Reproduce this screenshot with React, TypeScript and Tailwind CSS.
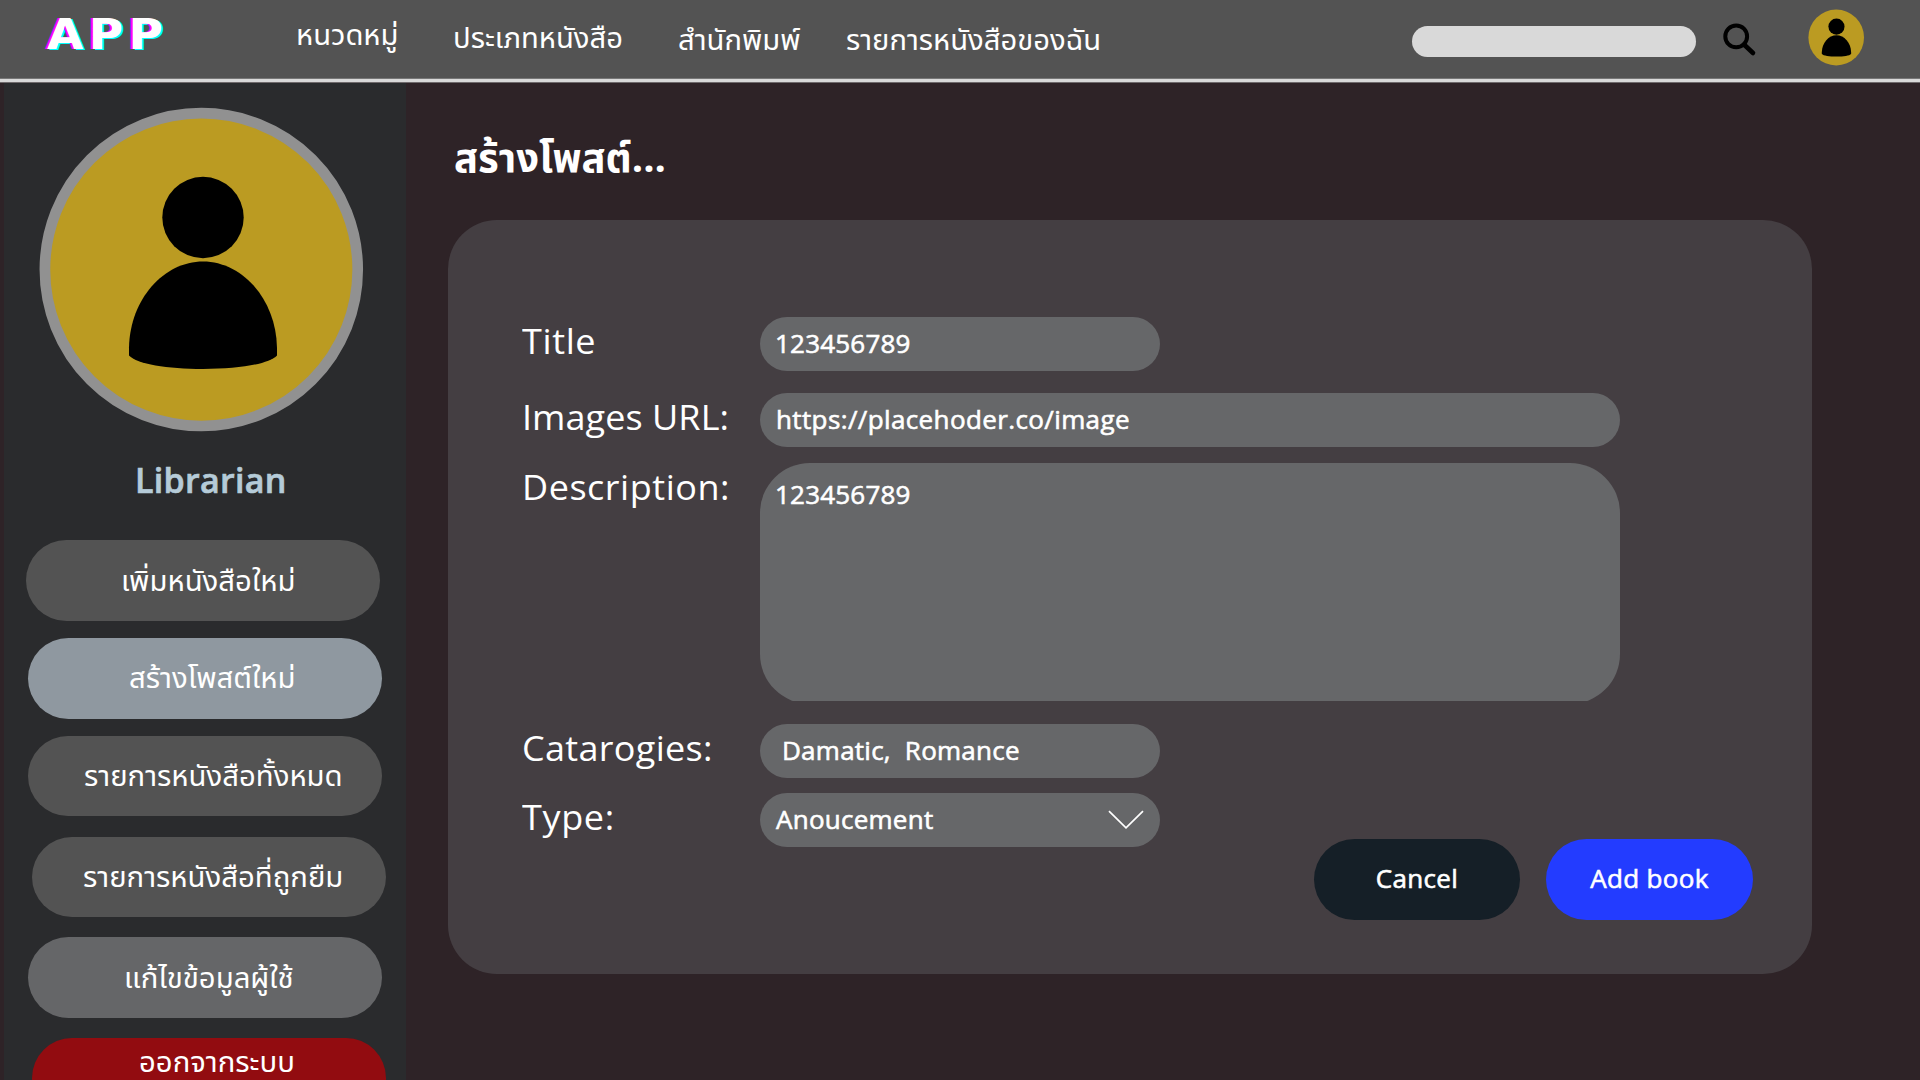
import type { ReactNode } from "react";

const thai = "font-['Noto_Sans_Thai','Noto_Sans',sans-serif]";
const latin = "font-['Open_Sans','Noto_Sans',sans-serif]";

function Logo() {
  return (
    <div className="ml-[47px] mt-[10px] h-[50px] w-[249px] shrink-0 origin-left scale-x-110 whitespace-nowrap font-['DejaVu_Sans',sans-serif] text-[42.5px] font-bold leading-[50px] tracking-[5px] [text-shadow:-2px_0_0_#ff00ff,2px_1px_0_#00ffff]">
      APP
    </div>
  );
}

function SearchIcon() {
  return (
    <svg className="ml-[26px] mt-[22px] shrink-0" width="36" height="36" viewBox="0 0 36 36" fill="none" stroke="#000">
      <circle cx="14.2" cy="14.4" r="10.9" strokeWidth="4" />
      <path d="M22 22.5 31 31" strokeWidth="4.6" strokeLinecap="round" />
    </svg>
  );
}

function Person() {
  return (
    <>
      <circle cx="164" cy="110.5" r="40.7" />
      <path d="M90 248.500V240.500C91 192 125 154.500 164 154.500S237 192 238 240.500V248.500C230 257 200 262 164 262S98 257 90 248.500Z" />
    </>
  );
}

function NavItem({ className, children }: { className: string; children: ReactNode }) {
  return <a className={`${thai} block h-[40px] shrink-0 whitespace-nowrap text-[29.2px] leading-[40px] ${className}`}>{children}</a>;
}

function Header() {
  return (
    <header className="relative z-10 flex h-[82px] shrink-0 items-start border-b-[3px] border-[#d9d9d9] bg-[#535353] shadow-[0_1px_0_#6f6a6c,inset_0_-1px_0_#777777]">
      <Logo />
      <nav className="flex w-[1116px] shrink-0 items-start">
        <NavItem className="mt-[16px] w-[157px]">หนวดหมู่</NavItem>
        <NavItem className="mt-[19px] w-[225px]">ประเภทหนังสือ</NavItem>
        <NavItem className="mt-[21px] w-[168px]">สำนักพิมพ์</NavItem>
        <NavItem className="mt-[21px]">รายการหนังสือของฉัน</NavItem>
      </nav>
      <div className="mt-[26px] h-[31px] w-[284px] shrink-0 rounded-full bg-[#d9d9d9]" />
      <SearchIcon />
      <svg className="ml-[50px] mt-[9px] shrink-0" width="57" height="57" viewBox="0 0 57 57">
        <ellipse cx="28.200" cy="28.500" rx="27.800" ry="28" fill="#bb9b22" />
        <g transform="translate(-4 -4.300) scale(0.198)">
          <Person />
        </g>
      </svg>
    </header>
  );
}

const menu = [
  { label: "เพิ่มหนังสือใหม่", box: "ml-[22px] mt-[33px] h-[81px] bg-[#535353] pl-[95px]", text: "mt-[2px]" },
  { label: "สร้างโพสต์ใหม่", box: "ml-[24px] mt-[17px] h-[81px] bg-[#8f98a0] pl-[101px]", text: "mt-[1px]" },
  { label: "รายการหนังสือทั้งหมด", box: "ml-[24px] mt-[17px] h-[80px] bg-[#535353] pl-[56px]", text: "mt-[1px]" },
  { label: "รายการหนังสือที่ถูกยืม", box: "ml-[28px] mt-[21px] h-[80px] bg-[#535353] pl-[51px]", text: "mt-[1px]" },
  { label: "แก้ไขข้อมูลผู้ใช้", box: "ml-[24px] mt-[20px] h-[81px] bg-[#656668] pl-[96px]", text: "mt-[2px]" },
  { label: "ออกจากระบบ", box: "ml-[28px] mt-[20px] h-[80px] bg-[#920c10] pl-[107px]", text: "mt-[9px] h-[32px] leading-[32px]" },
];

function Sidebar() {
  return (
    <aside className="ml-[4px] h-full w-[402px] shrink-0 overflow-hidden bg-[#2a2b2d]">
      <svg className="ml-[35px] mt-[25px]" width="325" height="325" viewBox="0 0 325 325">
        <circle cx="162.300" cy="162.600" r="156.400" fill="#bb9b22" stroke="#919191" strokeWidth="10.700" />
        <Person />
      </svg>
      <div className={`${latin} mt-[23px] mb-[35px] h-[50px] pl-[131px] text-[34px] font-semibold leading-[50px] tracking-[0.3px] text-[#b5cbd8] [-webkit-text-stroke:0.7px_#b5cbd8]`}>
        Librarian
      </div>
      {menu.map((item) => (
        <div key={item.label} className={`flex w-[354px] items-start rounded-full ${item.box}`}>
          <span className={`${thai} whitespace-nowrap text-[29.3px] ${item.text.includes("leading") ? "" : "leading-[80px]"} ${item.text}`}>{item.label}</span>
        </div>
      ))}
    </aside>
  );
}

function Row({ label, className, labelClass, children }: { label: string; className: string; labelClass: string; children: ReactNode }) {
  return (
    <div className={`flex items-start ${className}`}>
      <label className={`${latin} h-[48px] w-[238px] shrink-0 origin-left scale-x-105 whitespace-nowrap text-[34.3px] leading-[48px] ${labelClass}`}>{label}</label>
      {children}
    </div>
  );
}

const field = "font-['Open_Sans','Noto_Sans',sans-serif] text-[26px] leading-[52px] [-webkit-text-stroke:0.6px_white] bg-[#666769] whitespace-pre";

function Chevron() {
  return (
    <svg className="mr-[16px] mt-[17px]" width="36" height="20" viewBox="0 0 36 20" fill="none" stroke="#fff" strokeWidth="1.700">
      <path d="M1 1.200 18 17.800 35 1.200" />
    </svg>
  );
}

export default function App() {
  return (
    <div className="flex h-[1080px] w-[1920px] flex-col overflow-hidden bg-[#2e2327] text-white">
      <Header />
      <div className="flex h-[998px] shrink-0 items-start">
        <Sidebar />
        <main className="ml-[42px] w-[1364px] shrink-0">
          <h1 className={`${thai} mt-[52px] h-[50px] pl-[6px] pt-px text-[40px] font-bold leading-[50px]`}>สร้างโพสต์...</h1>
          <section className="mt-[36px] flex h-[754px] flex-col rounded-[49px] bg-[#443e42] pl-[74px]">
            <Row label="Title" className="mt-[97px]" labelClass="tracking-[0.6px]">
              <div className={`${field} h-[54px] w-[400px] rounded-full pl-[15px] tracking-[0.2px]`}>123456789</div>
            </Row>
            <Row label="Images URL:" className="mt-[22px]" labelClass="tracking-[0.05px]">
              <div className={`${field} h-[54px] w-[860px] rounded-full pl-[16px] leading-[51px] tracking-[0.38px]`}>https://placehoder.co/image</div>
            </Row>
            <Row label="Description:" className="mt-[16px]" labelClass="tracking-[0.5px]">
              <div className="h-[238px] w-[860px] overflow-hidden">
                <div className={`${field} h-[241px] rounded-[50px] pl-[15px] pt-[5px] tracking-[0.2px]`}>123456789</div>
              </div>
            </Row>
            <Row label="Catarogies:" className="mt-[23px]" labelClass="tracking-[0.3px]">
              <div className={`${field} h-[54px] w-[400px] rounded-full pl-[22px] leading-[51px] tracking-[0.25px]`}>{"Damatic,  Romance"}</div>
            </Row>
            <Row label="Type:" className="mt-[15px]" labelClass="tracking-[0.6px]">
              <div className={`${field} flex h-[54px] w-[400px] items-start justify-between rounded-full pl-[16px] tracking-[0.25px]`}>
                <span>Anoucement</span>
                <Chevron />
              </div>
            </Row>
            <div className={`${latin} -mt-[8px] flex justify-end gap-[26px] pr-[59px] text-[26px] leading-[78px] tracking-[0.35px] [-webkit-text-stroke:0.6px_white]`}>
              <button className="h-[81px] w-[206px] rounded-full bg-[#151f27] pb-[3px]">Cancel</button>
              <button className="h-[81px] w-[207px] rounded-full bg-[#233cff] pb-[3px]">Add book</button>
            </div>
          </section>
        </main>
      </div>
    </div>
  );
}
